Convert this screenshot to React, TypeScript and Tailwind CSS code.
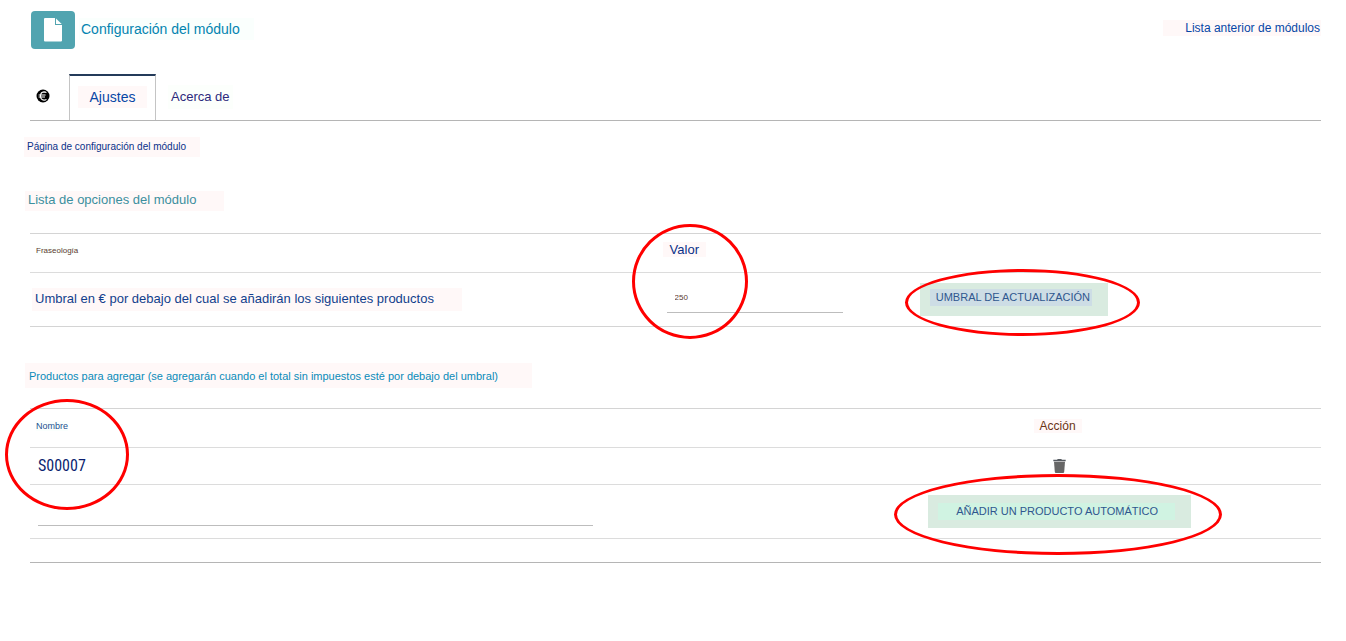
import React from "react";

function Ring({ className }: { className: string }) {
  return (
    <span
      aria-hidden="true"
      className={`pointer-events-none absolute z-10 rounded-[50%] border-3 border-[#ff0000] ${className}`}
    />
  );
}

function FileIcon() {
  return (
    <svg width="18" height="24" viewBox="0 0 18 24" aria-hidden="true">
      <path d="M1 0H11V7H18V22.500Q18 23.500 17 23.500H1Q0 23.500 0 22.500V1Q0 0 1 0Z" fill="#fff" />
      <path d="M12 0.500V6H17.700Z" fill="#fff" />
    </svg>
  );
}

function EuroIcon() {
  return (
    <svg width="14" height="14" viewBox="0 0 14 14" aria-hidden="true">
      <circle cx="7" cy="7" r="6.500" fill="#000" />
      <path
        d="M10.400 3.700Q9.500 2.900 8 2.900Q4.500 3.100 4.500 7Q4.500 10.900 8 11.100Q9.500 11.100 10.400 10.300M2.600 6H9.600M2.600 8H9"
        fill="none"
        stroke="#fff"
        strokeWidth="1.100"
      />
    </svg>
  );
}

function TrashIcon() {
  return (
    <svg width="13" height="14" viewBox="0 0 13 14" aria-hidden="true">
      <path d="M0.300 0.800H4L4.800 0H8.200L9 0.800H12.700V2.200H0.300Z" fill="#555a60" />
      <path d="M1 2.700H12L11.200 13Q11.100 14 10 14H3Q1.900 14 1.800 13Z" fill="#666" />
    </svg>
  );
}

export default function App() {
  return (
    <main className="min-h-screen overflow-x-hidden bg-white pr-[25px] pl-[30px] font-['Liberation_Sans',Arial,sans-serif]">
      <header className="flex items-start justify-between pt-[11px]">
        <div className="flex items-center">
          <span className="ml-px flex h-[38px] w-11 items-center justify-center rounded-sm bg-[#51a4b0]">
            <FileIcon />
          </span>
          <h1 className="mb-0.5 ml-1 bg-[#fafffd] pr-3.5 pl-0.5 text-sm leading-[22px] text-[#0284b0]">
            Configuración del módulo
          </h1>
        </div>
        <a href="#modulos" className="mt-[9px] bg-[#fff8f8] pr-px pl-[22px] text-xs leading-4 text-[#0747a6]">
          Lista anterior de módulos
        </a>
      </header>

      <nav className="mt-[25px] flex h-[47px] border-b border-[#b5b5b5]">
        <a href="#euro" aria-label="Euro" className="flex w-[39px] items-center pb-0.5 pl-1.5">
          <EuroIcon />
        </a>
        <a
          href="#ajustes"
          aria-current="page"
          className="flex w-[87px] items-center justify-center border-x border-t-2 border-x-[#c4c4c4] border-t-[#243b5a] pb-0.5 text-sm text-[#0747a6]"
        >
          <span className="bg-[#fff8f8] px-3 leading-[22px]">Ajustes</span>
        </a>
        <a href="#acerca" className="flex items-center pl-3 text-[13px] text-[#2d2a7c]">
          <span className="bg-[#fcfffc] px-[3px] leading-6">Acerca de</span>
        </a>
      </nav>

      <p className="mt-4 -ml-[6px] flex">
        <span className="bg-[#fff8f8] pr-3.5 pl-[3px] text-[10px] leading-5 text-[#0a3188]">
          Página de configuración del módulo
        </span>
      </p>

      <h2 className="mt-[34px] -ml-[5px] flex">
        <span className="bg-[#fff8f8] pr-7 pb-0.5 pl-[3px] text-[13px] leading-[18px] text-[#3c8f9e]">
          Lista de opciones del módulo
        </span>
      </h2>

      <table className="mt-[22px] w-full table-fixed border-separate border-spacing-0 border-t border-[#d4d4d4] text-left">
        <thead>
          <tr className="h-[39px]">
            <th className="w-[49%] border-b border-[#dcdcdc] p-0 pb-1 pl-1.5 text-[8px] leading-3 font-normal text-[#5c3a30]">
              <span className="bg-[#fbfffd]">Fraseología</span>
            </th>
            <th className="relative w-[20%] border-b border-[#dcdcdc] p-0 pb-1.5 text-[13px] leading-4 font-normal text-[#0a3188]">
              <span className="bg-[#fff8f8] px-[7px]">Valor</span>
              <Ring className="-top-2.5 -left-[31px] h-[115px] w-[116px]" />
            </th>
            <th className="border-b border-[#dcdcdc] p-0" />
          </tr>
        </thead>
        <tbody>
          <tr className="h-[54px]">
            <td className="border-b border-[#d4d4d4] p-0 pl-0.5 text-[13px] text-[#123f8c]">
              <label htmlFor="umbral" className="inline-block bg-[#fff8f8] pr-7 pb-0.5 pl-[3px] leading-[21px]">
                Umbral en € por debajo del cual se añadirán los siguientes productos
              </label>
            </td>
            <td className="border-b border-[#d4d4d4] p-0 pb-1 pl-1">
              <input
                id="umbral"
                defaultValue="250"
                className="block h-[31px] w-44 border-b border-[#bdbdbd] bg-transparent pl-2 text-[8px] text-[#5c3a30] outline-none"
              />
            </td>
            <td className="border-b border-[#d4d4d4] p-0">
              <span className="relative -ml-px inline-block align-middle">
                <button type="button" className="block h-[33px] bg-[#d9ebe0] pr-4 pb-1 pl-2.5 text-[11px] text-[#2f578f]">
                  <span className="block bg-[#cddde5] pr-0.5 pl-1.5 leading-[17px] whitespace-nowrap">
                    UMBRAL DE ACTUALIZACIÓN
                  </span>
                </button>
                <Ring className="-top-3.5 -left-[15px] h-[67px] w-[235px]" />
              </span>
            </td>
          </tr>
        </tbody>
      </table>

      <h2 className="mt-9 -ml-[5px] flex">
        <span className="bg-[#fff8f8] pt-0.5 pr-[34px] pl-1 text-[11px] leading-[23px] text-[#0a8bb8]">
          Productos para agregar (se agregarán cuando el total sin impuestos esté por debajo del umbral)
        </span>
      </h2>

      <table className="mt-5 w-full table-fixed border-separate border-spacing-0 border-t border-[#d4d4d4] text-left">
        <thead>
          <tr className="h-[39px]">
            <th className="relative w-[59.5%] border-b border-[#dcdcdc] p-0 pb-1 pl-1.5 text-[9px] leading-4 font-normal text-[#24508f]">
              <span className="bg-[#fafffd]">Nombre</span>
              <Ring className="-top-2.5 -left-[25px] h-[111px] w-[124px]" />
            </th>
            <th className="border-b border-[#dcdcdc] p-0 pr-1 pb-1 text-center text-xs leading-4 font-normal text-[#6b3416]">
              <span className="bg-[#fff8f8] px-1.5">Acción</span>
            </th>
          </tr>
        </thead>
        <tbody>
          <tr className="h-[37px]">
            <td className="border-b border-[#dcdcdc] p-0 pl-2 font-['Liberation_Sans_Narrow','Roboto_Condensed',Roboto,sans-serif] text-base leading-5 text-[#0b1f70]">
              S00007
            </td>
            <td className="border-b border-[#dcdcdc] p-0">
              <button type="button" aria-label="Eliminar" className="mx-auto block">
                <TrashIcon />
              </button>
            </td>
          </tr>
          <tr className="h-[54px]">
            <td className="border-b border-[#dcdcdc] p-0 pb-0.5 pl-2">
              <input
                aria-label="Producto"
                className="block h-[30px] w-[73%] border-b border-[#bdbdbd] bg-transparent text-base outline-none"
              />
            </td>
            <td className="border-b border-[#dcdcdc] p-0 text-center">
              <span className="relative inline-block align-middle">
                <button type="button" className="block h-[33px] bg-[#d9ebe0] pr-4 pl-2.5 text-[11px] text-[#2f578f]">
                  <span className="block bg-[#d0f3e2] pr-[17px] pl-[18px] leading-[17px] whitespace-nowrap">
                    AÑADIR UN PRODUCTO AUTOMÁTICO
                  </span>
                </button>
                <Ring className="-top-[21px] -left-[34px] h-[81px] w-[328px]" />
              </span>
            </td>
          </tr>
          <tr className="h-6">
            <td className="border-b border-[#b5b5b5] p-0" />
            <td className="border-b border-[#b5b5b5] p-0" />
          </tr>
        </tbody>
      </table>
    </main>
  );
}
